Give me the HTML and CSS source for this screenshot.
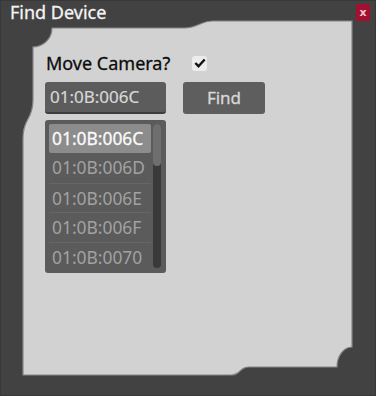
FILE: index.html
```html
<!DOCTYPE html>
<html lang="en">
<head>
  <meta charset="UTF-8">
  <title>Find Device</title>
  <link rel="stylesheet" href="styles.css">
</head>
<body>
  <div class="window">
    <div class="titlebar">
      <span class="title">Find Device</span>
      <button class="close">x</button>
    </div>
    <div class="panel">
      <div class="row">
        <span class="label">Move Camera?</span>
        <span class="check">
          <svg width="12" height="10" viewBox="0 0 12 10"><path d="M1.3 5 L4.5 8.2 L10.7 1.5" fill="none" stroke="#111" stroke-width="2.4"/></svg>
        </span>
      </div>
      <div class="row search">
        <input class="field" type="text" value="01:0B:006C" spellcheck="false">
        <button class="btn">Find</button>
      </div>
      <div class="list">
        <div class="items">
          <div class="item selected">01:0B:006C</div>
          <div class="item">01:0B:006D</div>
          <div class="item">01:0B:006E</div>
          <div class="item">01:0B:006F</div>
          <div class="item">01:0B:0070</div>
        </div>
        <div class="scroll"><div class="thumb"></div></div>
      </div>
    </div>
  </div>
</body>
</html>
```

FILE: styles.css
```css
html, body {
  margin: 0;
  padding: 0;
  background: #424242;
  font-family: "Noto Sans", "Open Sans", sans-serif;
}
.window {
  width: 376px;
  height: 396px;
  box-sizing: border-box;
  background: #424242;
  box-shadow: inset 0 0 0 1px #383838;
}
.titlebar {
  height: 20px;
  display: flex;
  justify-content: space-between;
  align-items: flex-start;
}
.title {
  color: #f4f4f4;
  font-size: 18px;
  line-height: 22px;
  margin-top: 1px;
  padding-left: 10px;
  -webkit-text-stroke: 0.3px #f4f4f4;
}
.close {
  width: 14px;
  height: 17px;
  margin: 4px 6px 0 0;
  padding: 0;
  border: none;
  background: #a30f2e;
  color: #f0c8d0;
  font-family: "DejaVu Sans", sans-serif;
  font-size: 11px;
  font-weight: bold;
  line-height: 15px;
}
.panel {
  width: 332px;
  height: 356px;
  margin-left: 22px;
  box-sizing: border-box;
  padding: 31px 0 0 23px;
  background: url("data:image/svg+xml,%3Csvg xmlns='http://www.w3.org/2000/svg' width='332' height='356'%3E%3Cpath d='M30,8 L163,8 C175,8 179,1 191,1 L330,1 L330,327 A15 20 0 0 0 315,347 L227,347 C217,347 219,355 209,355 L1,355 L1,118 C1,98 11,100 11,80 L11,27 A19 19 0 0 0 30,8 Z' fill='%23d2d2d2' stroke='%23858585' stroke-width='1.2'/%3E%3C/svg%3E") no-repeat;
}
.row {
  display: flex;
  align-items: center;
}
.label {
  width: 146px;
  padding-left: 1px;
  color: #0c0c0c;
  font-size: 18px;
  line-height: 24px;
  -webkit-text-stroke: 0.3px #0c0c0c;
}
.check {
  width: 15px;
  height: 15px;
  border-radius: 3px;
  background: #ececec;
  display: flex;
  align-items: center;
  justify-content: center;
}
.search {
  margin-top: 7px;
  gap: 17px;
}
.field {
  width: 121px;
  height: 32px;
  box-sizing: border-box;
  margin: 0;
  padding: 0 0 2px 5px;
  border: none;
  border-bottom: 2px solid #3e3e3e;
  border-radius: 3px;
  background: #5c5c5c;
  color: #d8d8d8;
  font-family: inherit;
  font-size: 17px;
  outline: none;
  -webkit-text-stroke: 0.2px #d8d8d8;
}
.btn {
  width: 82px;
  height: 32px;
  margin: 0;
  padding: 0 0 2px;
  border: none;
  border-radius: 3px;
  background: #5e5e5e;
  color: #d8d8d8;
  font-family: inherit;
  font-size: 17px;
  -webkit-text-stroke: 0.3px #d8d8d8;
}
.list {
  width: 121px;
  height: 153px;
  box-sizing: border-box;
  margin-top: 6px;
  padding: 4px 5px 5px 4px;
  border-radius: 3px;
  background: #5b5b5b;
  display: flex;
  gap: 2px;
}
.items {
  flex: 1;
}
.item {
  height: 29.4px;
  box-sizing: border-box;
  padding-left: 3px;
  color: #a2a2a2;
  font-size: 17.4px;
  line-height: 29px;
}
.item + .item + .item {
  border-top: 1px solid #676767;
  line-height: 28px;
}
.item.selected {
  background: #8c8c8c;
  border-radius: 2px;
  color: #fafafa;
  -webkit-text-stroke: 0.3px #fafafa;
}
.scroll {
  width: 8px;
  height: 144px;
  border-radius: 4px;
  background: #393939;
}
.thumb {
  height: 42px;
  border-radius: 4px;
  background: #6e6e6e;
}
```
